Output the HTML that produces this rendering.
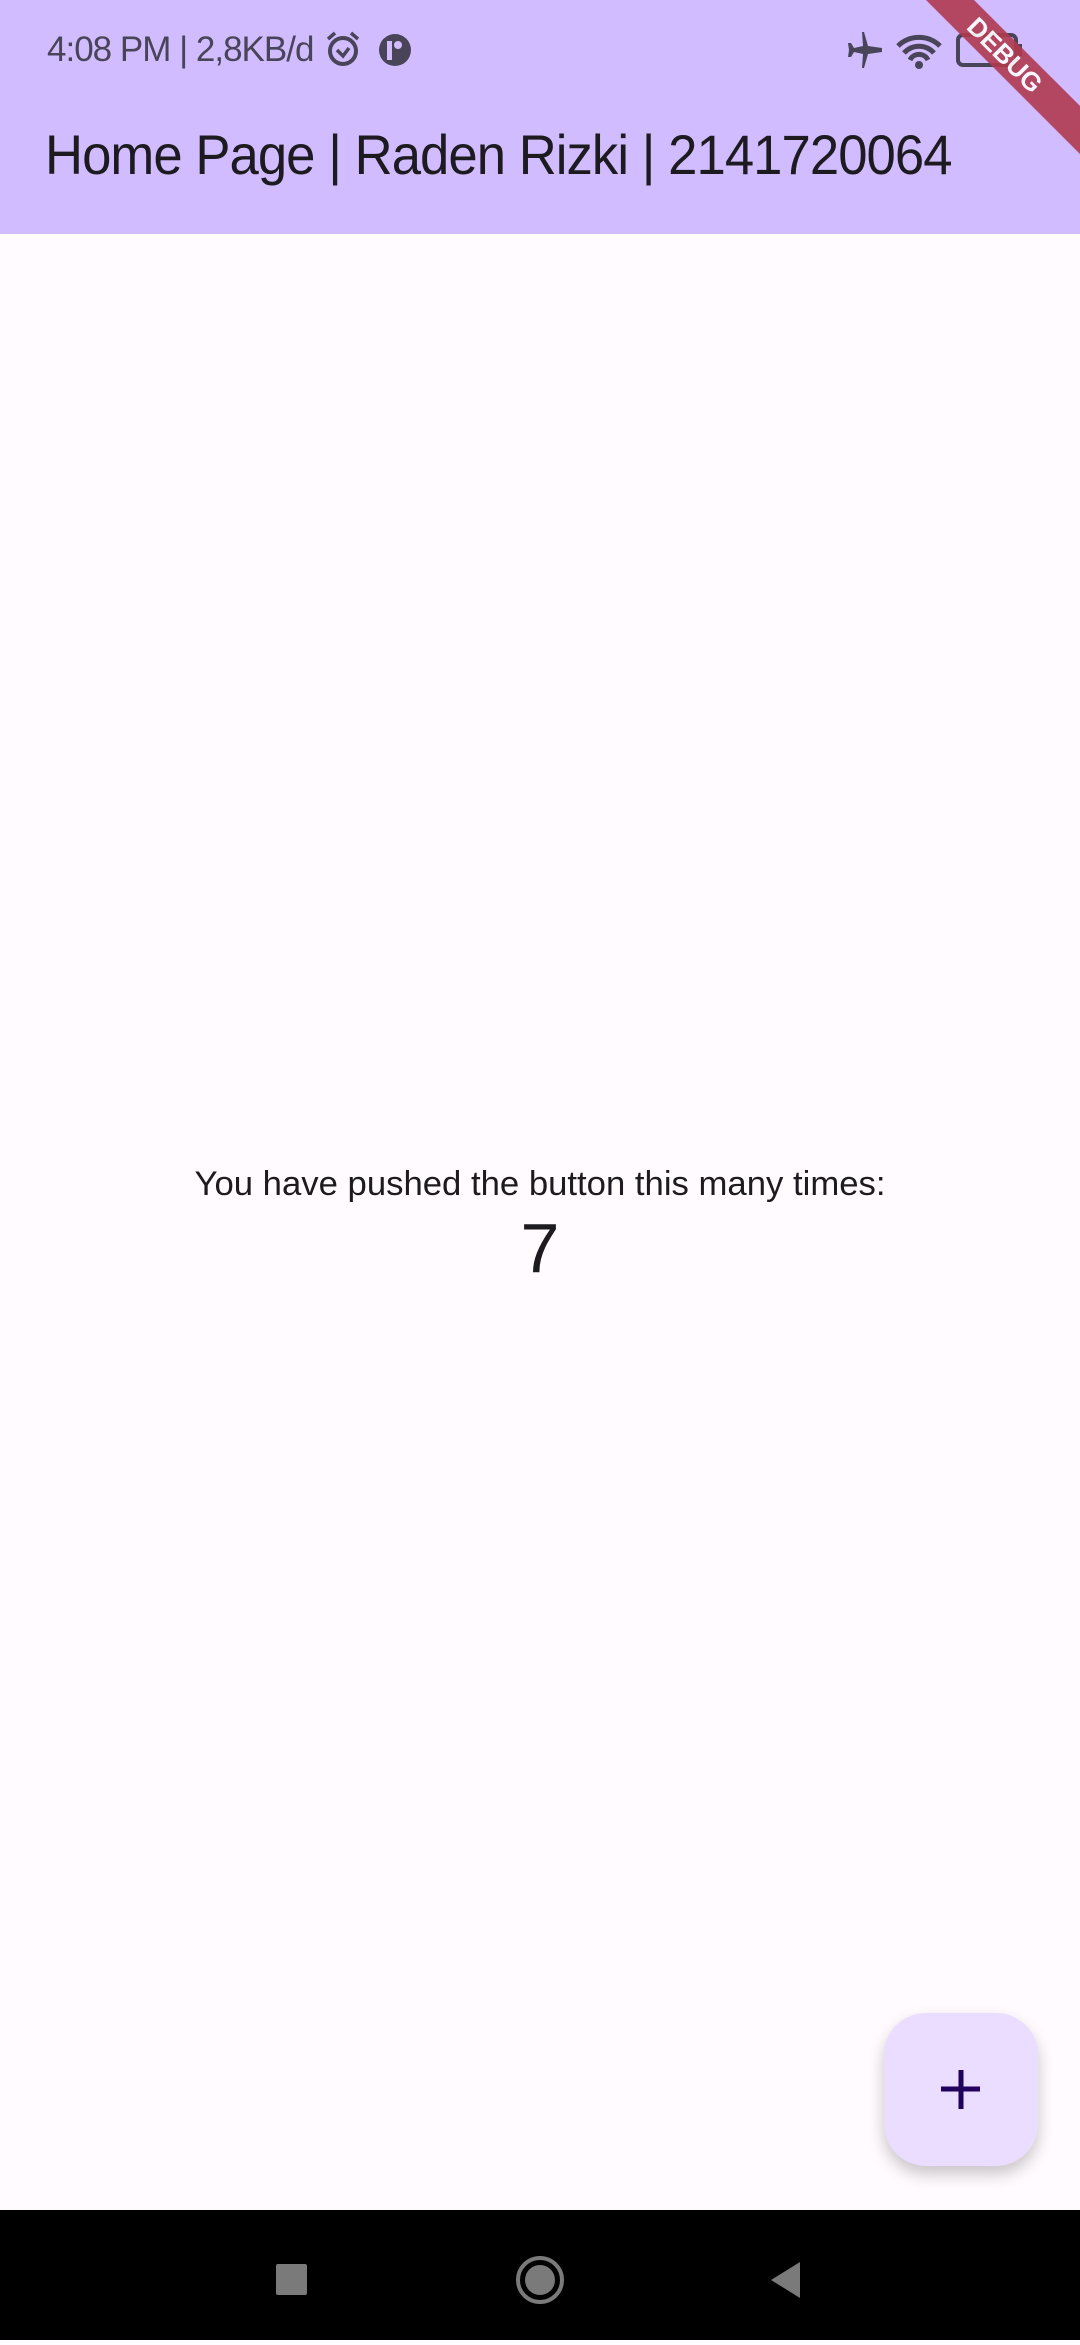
<!DOCTYPE html>
<html><head><meta charset="utf-8"><style>
body{margin:0;width:1080px;height:2340px;background:#fffbfe;position:relative;overflow:hidden;font-family:"Liberation Sans",sans-serif;}
.bar{position:absolute;left:0;top:0;width:1080px;height:234px;background:#d0bcff;}
.st{position:absolute;left:47px;top:30px;font-size:35px;color:#4a4458;letter-spacing:-1px;}
.title{position:absolute;left:45px;top:122px;font-size:56px;color:#1d1b20;white-space:nowrap;letter-spacing:-1px;transform:scaleX(0.94);transform-origin:left top;}
.c1{position:absolute;left:0;width:1080px;text-align:center;top:1165px;font-size:34.7px;color:#1d1b20;}
.c2{position:absolute;left:0;width:1080px;text-align:center;top:1208px;font-size:70px;color:#1d1b20;}
.fab{position:absolute;left:884px;top:2013px;width:154px;height:153px;border-radius:42px;background:#eaddff;box-shadow:0 8px 16px rgba(0,0,0,.22);}
.nav{position:absolute;left:0;top:2210px;width:1080px;height:130px;background:#000;}
.dbg{position:absolute;right:-75px;top:38px;width:300px;height:34px;background:#b03a4f;transform:rotate(45deg);color:#fff;font-weight:bold;font-size:26px;text-align:center;line-height:34px;opacity:.9}
</style></head><body>
<div class="bar"></div>
<div class="st">4:08 PM | 2,8KB/d</div>
<svg style="position:absolute;left:322px;top:30px" width="90" height="40" viewBox="0 0 90 40">
<circle cx="21" cy="21" r="13" fill="none" stroke="#4a4458" stroke-width="4"/><path d="M6 9l7-6M36 9l-7-6M15 20l6 6 6-8" fill="none" stroke="#4a4458" stroke-width="3.5"/>
<circle cx="73" cy="20" r="16" fill="#4a4458"/><rect x="65" y="11" width="5" height="19" fill="#d0bcff"/><circle cx="76" cy="15" r="4" fill="#d0bcff"/></svg>
<svg style="position:absolute;left:838px;top:28px" width="200" height="44" viewBox="0 0 200 44">
<path d="M24 4l2 0 4 14 14 2v4l-14 2-4 14h-2l1-14-9-2-3 5h-3l1-7-1-7h3l3 5 9-2z" fill="#4a4458"/>
<path d="M60 18a30 30 0 0 1 42 0M66 25a20 20 0 0 1 30 0M72 32a10 10 0 0 1 18 0" fill="none" stroke="#4a4458" stroke-width="5"/><circle cx="81" cy="37" r="4" fill="#4a4458"/>
<rect x="120" y="7" width="58" height="30" rx="5" fill="none" stroke="#4a4458" stroke-width="4"/><rect x="180" y="16" width="4" height="12" fill="#4a4458"/></svg>
<div class="dbg">DEBUG</div>
<div class="title">Home Page | Raden Rizki | 2141720064</div>
<div class="c1">You have pushed the button this many times:</div>
<div class="c2">7</div>
<div class="fab"><svg width="154" height="153"><path d="M77 57v39M57 76h39" stroke="#21005d" stroke-width="5"/></svg></div>
<div class="nav"><svg width="1080" height="130">
<rect x="276" y="54" width="31" height="31" fill="#7a7a7a" rx="2"/>
<circle cx="540" cy="70" r="22" fill="none" stroke="#7a7a7a" stroke-width="4"/><circle cx="540" cy="70" r="15" fill="#7a7a7a"/>
<path d="M800 52v36l-29-18z" fill="#7a7a7a"/></svg></div>
</body></html>
